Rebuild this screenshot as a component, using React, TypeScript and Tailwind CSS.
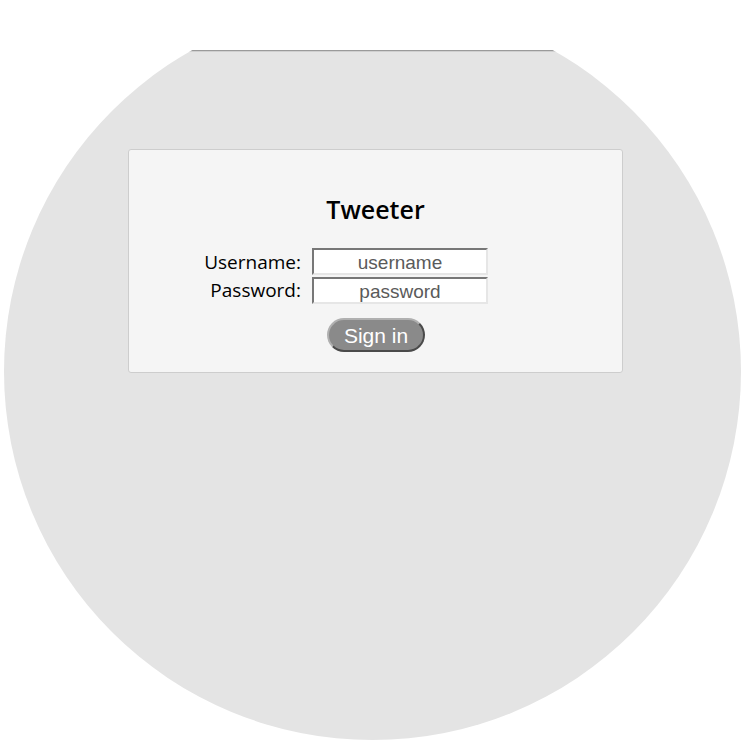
import { useState } from "react";

function App() {
  const [form, setForm] = useState({ username: "", password: "" });

  const handleChange = (e: React.ChangeEvent<HTMLInputElement>) => {
    setForm({ ...form, [e.target.name]: e.target.value });
  };

  return (
    <div className="w-[745px] h-[745px] bg-white overflow-hidden">
      <div className="mt-[50px] h-[695px] overflow-hidden">
        {/* big grey disc, its top is cut off by the wrapper */}
        <div className="-mt-[47px] ml-[4px] w-[737px] h-[737px] rounded-full bg-[#e4e4e4] overflow-hidden">
          <div className="h-[47px]" />
          <div className="h-px bg-[#9a9a9a]" />
          <div className="h-px bg-[#cfcfcf]" />

          <div className="mt-[97px] ml-[124px] w-[495px] h-[224px] bg-[#f5f5f5] border border-[#cdcdcd] rounded-[3px] flex flex-col items-center pt-[42px]">
            <h1 className="text-[25px] font-semibold text-black leading-[34px] font-['Open_Sans',sans-serif]">
              Tweeter
            </h1>

            <div className="self-start mt-[22px] grid grid-cols-[172px_176px] auto-rows-[27px] gap-x-[11px] gap-y-[2px]">
              <label className="text-right text-[19px] leading-[29px] text-black font-['Open_Sans',sans-serif]">
                Username:
              </label>
              <input
                name="username"
                placeholder="username"
                value={form.username}
                onChange={handleChange}
                className="w-[176px] h-[27px] pt-[3px] bg-white text-center text-[19px] text-[#333] placeholder:text-[#5a5a5a] font-['Liberation_Sans',Arial,sans-serif] border-2 border-t-[#777] border-l-[#777] border-b-[#e6e6e6] border-r-[#e6e6e6] outline-none"
              />
              <label className="text-right text-[19px] leading-[27px] text-black font-['Open_Sans',sans-serif]">
                Password:
              </label>
              <input
                name="password"
                type="password"
                placeholder="password"
                value={form.password}
                onChange={handleChange}
                className="w-[176px] h-[27px] pt-[3px] bg-white text-center text-[19px] text-[#333] placeholder:text-[#5a5a5a] font-['Liberation_Sans',Arial,sans-serif] border-2 border-t-[#777] border-l-[#777] border-b-[#e6e6e6] border-r-[#e6e6e6] outline-none"
              />
            </div>

            <button className="mt-[14px] ml-[1px] w-[98px] h-[34px] rounded-full bg-[#8a8a8a] text-white text-[21px] leading-none font-['Liberation_Sans',Arial,sans-serif] border-2 border-t-[#b0b0b0] border-l-[#b0b0b0] border-b-[#4a4a4a] border-r-[#4a4a4a]">
              Sign in
            </button>
          </div>
        </div>
      </div>
    </div>
  );
}

export default App;
